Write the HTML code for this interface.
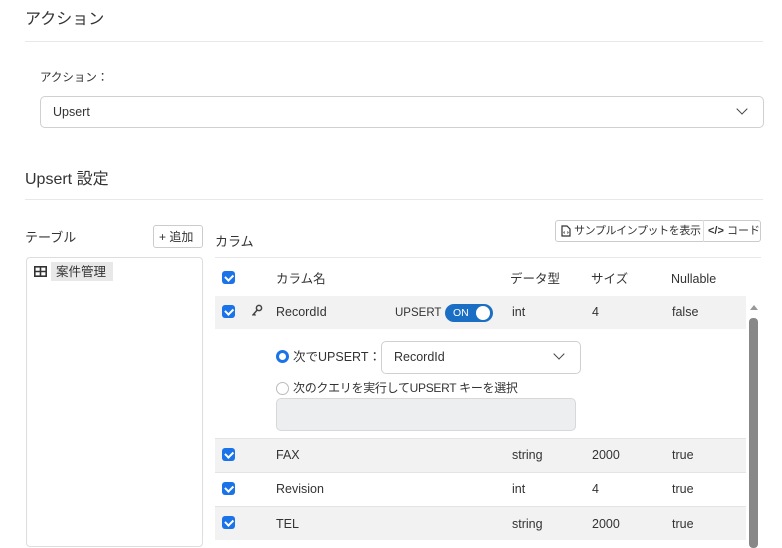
<!DOCTYPE html>
<html><head><meta charset="utf-8"><style>
*{box-sizing:border-box;margin:0;padding:0}
body{width:782px;height:538px;overflow:hidden;background:#fff;font-family:"Liberation Sans","Noto Sans CJK JP",sans-serif;color:#333;font-size:12.5px;line-height:16px;position:relative}
.a{position:absolute;white-space:nowrap;line-height:16px}
.hr{position:absolute;height:1px;background:#e8e8e8}
.cb{position:absolute;width:13px;height:13px;border-radius:3px;background:#1a73e8}
.cb:after{content:"";position:absolute;left:3px;top:2.5px;width:6px;height:3.5px;border-left:2px solid #fff;border-bottom:2px solid #fff;transform:rotate(-45deg)}
.row{position:absolute;left:215px;width:531px;height:34px}
.chev{position:absolute;width:8px;height:8px;border-right:1.6px solid #444;border-bottom:1.6px solid #444;transform:rotate(45deg)}
</style></head><body>
<div class="a" style="left:25px;top:10px;font-size:16px;line-height:20px">アクション</div>
<div class="hr" style="left:25px;top:41px;width:738px"></div>
<div class="a" style="left:40px;top:70px;font-size:11.5px">アクション：</div>
<div class="a" style="left:40px;top:96px;width:724px;height:32px;border:1px solid #d0d0d0;border-radius:5px"></div>
<div class="a" style="left:53px;top:104px;font-size:12.5px">Upsert</div>
<div class="chev" style="left:738px;top:105px"></div>
<div class="a" style="left:25px;top:170px;font-size:16px;line-height:20px">Upsert 設定</div>
<div class="hr" style="left:25px;top:199px;width:738px"></div>

<div class="a" style="left:25px;top:230px;font-size:13px">テーブル</div>
<div class="a" style="left:153px;top:225px;width:50px;height:23px;border:1px solid #ccc;border-radius:3px;font-size:12px;padding:3px 0 0 5px">+ 追加</div>
<div class="a" style="left:26px;top:257px;width:177px;height:290px;border:1px solid #ddd;border-radius:4px"></div>
<svg class="a" style="left:34px;top:266px" width="13" height="11" viewBox="0 0 13 11"><rect x="0.8" y="0.8" width="11.4" height="9.4" fill="none" stroke="#333" stroke-width="1.6"/><path d="M0 5.5H13M6.5 0V11" stroke="#333" stroke-width="1.6"/></svg>
<div class="a" style="left:51px;top:262px;width:62px;height:19px;background:#e8e8e8;font-size:12.5px;padding:2px 0 0 5px">案件管理</div>

<div class="a" style="left:215px;top:234px;font-size:13px">カラム</div>
<div class="a" style="left:555px;top:220px;width:206px;height:22px;border:1px solid #ccc;border-radius:3px"></div>
<div class="a" style="left:703px;top:220px;width:1px;height:22px;background:#ddd"></div>
<svg class="a" style="left:561px;top:225px" width="10" height="12" viewBox="0 0 10 12"><path d="M1 1H6L9 4V11H1Z" fill="none" stroke="#333" stroke-width="1.2"/><path d="M3.5 6.5L2.8 7.5L3.5 8.5M6.5 6.5L7.2 7.5L6.5 8.5" stroke="#333" fill="none" stroke-width="0.9"/></svg>
<div class="a" style="left:574px;top:223px;font-size:11px;letter-spacing:-0.4px">サンプルインプットを表示</div>
<div class="a" style="left:708px;top:223px;font-size:11px"><b>&lt;/&gt;</b> コード</div>
<div class="hr" style="left:215px;top:257px;width:546px"></div>

<div class="cb" style="left:222px;top:271px"></div>
<div class="a" style="left:276px;top:271px">カラム名</div>
<div class="a" style="left:510px;top:271px">データ型</div>
<div class="a" style="left:591px;top:271px">サイズ</div>
<div class="a" style="left:671px;top:271px">Nullable</div>

<div class="row" style="top:296px;background:#f2f2f2;height:33px"></div>
<div class="cb" style="left:222px;top:305px"></div>
<svg class="a" style="left:251px;top:304px" width="12" height="13" viewBox="0 0 12 13"><circle cx="8" cy="4" r="2.6" fill="none" stroke="#444" stroke-width="1.5"/><path d="M6.2 6L1.5 11.5M3 10L4.5 11.5" stroke="#444" stroke-width="1.5" fill="none"/></svg>
<div class="a" style="left:276px;top:304px">RecordId</div>
<div class="a" style="left:395px;top:305px;font-size:11.5px">UPSERT</div>
<div class="a" style="left:445px;top:304px;width:48px;height:18px;border-radius:9px;background:#1a6fc4"></div>
<div class="a" style="left:453px;top:305px;font-size:10.5px;color:#fff">ON</div>
<div class="a" style="left:476px;top:306px;width:14px;height:14px;border-radius:7px;background:#fff"></div>
<div class="a" style="left:512px;top:304px">int</div>
<div class="a" style="left:592px;top:304px">4</div>
<div class="a" style="left:672px;top:304px">false</div>

<div class="a" style="left:748px;top:296px;width:13px;height:242px;background:#fff"></div>
<div class="a" style="left:750px;top:305px;width:0;height:0;border-left:4px solid transparent;border-right:4px solid transparent;border-bottom:5px solid #999"></div>
<div class="a" style="left:749px;top:318px;width:9px;height:230px;border-radius:4px;background:#888"></div>

<div class="a" style="left:276px;top:350px;width:13px;height:13px;border-radius:50%;border:3.5px solid #1a73e8;background:#fff"></div>
<div class="a" style="left:293px;top:349px">次でUPSERT：</div>
<div class="a" style="left:381px;top:341px;width:200px;height:33px;border:1px solid #d0d0d0;border-radius:5px"></div>
<div class="a" style="left:394px;top:349px">RecordId</div>
<div class="chev" style="left:555px;top:350px"></div>
<div class="a" style="left:276px;top:382px;width:13px;height:13px;border-radius:50%;border:1px solid #bbb"></div>
<div class="a" style="left:293px;top:380px;font-size:12px;letter-spacing:-0.3px">次のクエリを実行してUPSERT キーを選択</div>
<div class="a" style="left:276px;top:398px;width:300px;height:33px;border:1px solid #d6d8da;border-radius:5px;background:#eceeef"></div>

<div class="row" style="top:438px;background:#f2f2f2;border-top:1px solid #e4e4e4"></div>
<div class="cb" style="left:222px;top:448px"></div>
<div class="a" style="left:276px;top:447px">FAX</div>
<div class="a" style="left:512px;top:447px">string</div>
<div class="a" style="left:592px;top:447px">2000</div>
<div class="a" style="left:672px;top:447px">true</div>

<div class="row" style="top:472px;border-top:1px solid #e4e4e4"></div>
<div class="cb" style="left:222px;top:482px"></div>
<div class="a" style="left:276px;top:481px">Revision</div>
<div class="a" style="left:512px;top:481px">int</div>
<div class="a" style="left:592px;top:481px">4</div>
<div class="a" style="left:672px;top:481px">true</div>

<div class="row" style="top:506px;background:#f2f2f2;border-top:1px solid #e4e4e4"></div>
<div class="cb" style="left:222px;top:516px"></div>
<div class="a" style="left:276px;top:516px">TEL</div>
<div class="a" style="left:512px;top:516px">string</div>
<div class="a" style="left:592px;top:516px">2000</div>
<div class="a" style="left:672px;top:516px">true</div>
</body></html>
